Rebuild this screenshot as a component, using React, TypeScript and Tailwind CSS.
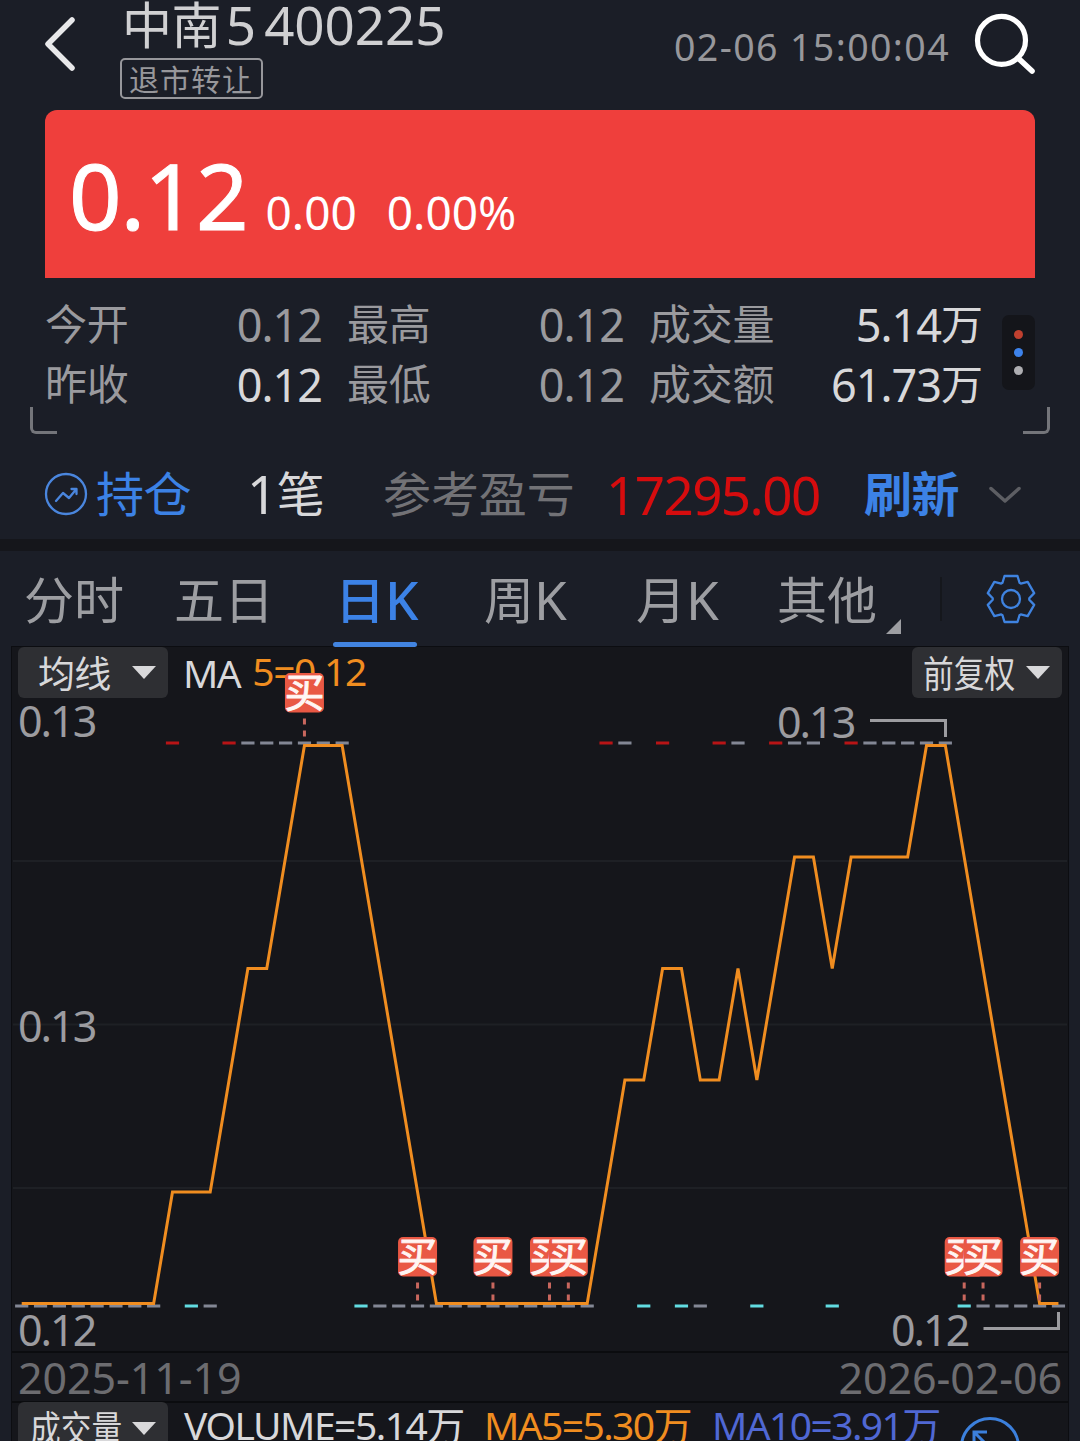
import type { ReactNode } from 'react';

const STEP = 18.85;
const px = (index: number) => 21.7 + STEP * index;

// [index, y] vertices of the MA5 curve
const maPoints = [
  [0, 1303.5], [7, 1303.5], [8, 1192], [10, 1192], [12, 968.5], [13, 968.5], [15, 745.5], [17, 745.5],
  [22, 1303.5], [30, 1303.5], [32, 1080], [33, 1080], [34, 968.5], [35, 968.5], [36, 1080], [37, 1080],
  [38, 968.5], [39, 1080], [41, 857], [42, 857], [43, 968.5], [44, 857], [47, 857], [48, 745.5],
  [49, 745.5], [54, 1303.5], [55, 1303.5],
];

const topUp = [8, 11, 31, 34, 37, 40, 44];
const topFlat = [12, 13, 14, 15, 16, 17, 32, 38, 41, 42, 45, 46, 47, 48, 49];
const lowDown = [9, 18, 33, 35, 39, 43, 50];
const lowFlat = [
  0, 1, 2, 3, 4, 5, 6, 7, 10, 19, 20, 21, 22, 23, 24, 25, 26, 27, 28, 29, 30, 36, 51, 52, 53, 54, 55,
];

const buys = [
  { index: 15, y: 673 },
  { index: 21, y: 1237 },
  { index: 25, y: 1237 },
  { index: 28, y: 1237 },
  { index: 29, y: 1237 },
  { index: 50, y: 1237 },
  { index: 51, y: 1237 },
  { index: 54, y: 1237 },
];

const tabs = [
  { cjk: '分时', latin: '', width: 'w-[150px]' },
  { cjk: '五日', latin: '', width: 'w-[161px]' },
  { cjk: '日', latin: 'K', width: 'w-[149px]', active: true },
  { cjk: '周', latin: 'K', width: 'w-[152px]' },
  { cjk: '月', latin: 'K', width: 'w-[141px]' },
  { cjk: '其他', latin: '', width: 'w-[129px]', more: true },
];

const stats = [
  [
    { label: '今开', value: '0.12', bright: false },
    { label: '最高', value: '0.12', bright: false },
    { label: '成交量', value: '5.14', unit: '万', bright: true },
  ],
  [
    { label: '昨收', value: '0.12', bright: true },
    { label: '最低', value: '0.12', bright: false },
    { label: '成交额', value: '61.73', unit: '万', bright: true },
  ],
];

function Num({ className = '', children }: { className?: string; children: ReactNode }) {
  return <span className={`font-['Noto_Sans','Noto_Sans_CJK_SC',sans-serif] leading-none ${className}`}>{children}</span>;
}

function Dashes({ items, y, color }: { items: number[]; y: number; color: string }) {
  return (
    <>
      {items.map((index) => (
        <rect key={index} x={px(index) - 6.6} y={y - 1.5} width={13.2} height={3} fill={color} />
      ))}
    </>
  );
}

function GearIcon() {
  const tooth = [[-8.5, -16.2], [-6.5, -23], [6.5, -23], [8.5, -16.2]];
  const points = [0, 1, 2, 3, 4, 5].flatMap((n) => {
    const a = (n * Math.PI) / 3;
    return tooth.map(([x, y]) => `${x * Math.cos(a) - y * Math.sin(a)},${x * Math.sin(a) + y * Math.cos(a)}`);
  });
  return (
    <svg className="h-[52px] w-[52px]" viewBox="-26 -26 52 52" fill="none" stroke="#3f83e0" strokeWidth="2.3" strokeLinejoin="round">
      <polygon points={points.join(' ')} />
      <circle r="9" />
    </svg>
  );
}

function Header() {
  return (
    <header className="flex h-[110px] items-start">
      <svg className="ml-10 mt-3 h-16 w-10" viewBox="40 12 40 64" fill="none" stroke="#e8e8ea" strokeWidth="5.5" strokeLinecap="round" strokeLinejoin="round">
        <path d="M72 20 48 44 72 68" />
      </svg>
      <div className="ml-10 flex flex-col items-start">
        <div className="flex h-[46px] items-center text-[#d0d0d2]">
          <span className="mb-[3px] ml-[2px] text-[50px] leading-none tracking-[-0.6px]">中南</span>
          <Num className="ml-[5px] mt-[3px] text-[53px]">5</Num>
          <Num className="ml-[8px] mt-[3px] text-[53px] tracking-[-0.1px]">400225</Num>
        </div>
        <div className="mt-3 flex h-[41px] w-[143px] items-center rounded-[5px] border-2 border-[#97979b] pb-[2px] pl-[7px] text-[30px] leading-none tracking-[1px] text-[#97979b]">
          退市转让
        </div>
      </div>
      <Num className="ml-auto mr-[20px] mt-[28px] text-[37.5px] tracking-[1.400px] text-[#97979b]">02-06 15:00:04</Num>
      <svg className="mr-[42px] mt-[10px] h-[68px] w-[68px]" viewBox="970 10 68 68" fill="none" stroke="#fff" strokeLinecap="round">
        <circle cx="1001.5" cy="40.3" r="24" strokeWidth="5.2" />
        <path d="M1018 58 1032 71" strokeWidth="5.6" />
      </svg>
    </header>
  );
}

function PriceBanner() {
  return (
    <section className="mx-[45px] flex h-[168px] items-baseline rounded-t-[12px] bg-[#ef3f3c] pl-6 text-white">
      <Num className="pt-[39px] text-[92px] tracking-[-1px] [-webkit-text-stroke:1px_white]">0.12</Num>
      <Num className="ml-[18px] text-[46px]">0.00</Num>
      <Num className="ml-[30px] text-[46px]">0.00%</Num>
    </section>
  );
}

function Stats() {
  return (
    <section className="relative flex h-[168px] pl-[45px] pt-[14px]">
      <div className="flex flex-col">
        {stats.map((row, i) => (
          <div key={i} className="grid h-[60px] grid-cols-[277px_277px_334px] items-center gap-x-[25px]">
            {row.map((cell) => (
              <div key={cell.label} className="flex items-center justify-between">
                <span className="pb-[1px] text-[42px] leading-none tracking-[-0.3px] text-[#9a9a9e]">{cell.label}</span>
                <span className={`flex items-center ${cell.bright ? 'text-[#d8d8da]' : 'text-[#9a9a9e]'}`}>
                  <Num className="pt-[4px] text-[45px] tracking-[-1px]">{cell.value}</Num>
                  {cell.unit ? <span className="pb-[1px] text-[42px] leading-none">{cell.unit}</span> : null}
                </span>
              </div>
            ))}
          </div>
        ))}
      </div>
      <div className="absolute right-[45px] top-[37px] flex h-[75px] w-[33px] flex-col items-center justify-center gap-[9px] rounded-[7px] bg-[#14151a]">
        <span className="h-[9px] w-[9px] rounded-full bg-[#c0402f]" />
        <span className="h-[9px] w-[9px] rounded-full bg-[#3d83ec]" />
        <span className="h-[9px] w-[9px] rounded-full bg-[#aeaeb2]" />
      </div>
      <span className="absolute left-[30px] top-[129px] h-[27px] w-[27px] rounded-bl-[6px] border-b-[3px] border-l-[3px] border-[#74757a]" />
      <span className="absolute right-[30px] top-[129px] h-[27px] w-[27px] rounded-br-[6px] border-b-[3px] border-r-[3px] border-[#74757a]" />
    </section>
  );
}

function Position() {
  return (
    <section className="flex h-[93px] items-center pl-[44px] text-[48px] leading-none tracking-[-0.5px]">
      <svg className="mt-[3px] h-11 w-11" viewBox="0 0 44 44" fill="none" stroke="#4a86de" strokeWidth="2.3" strokeLinecap="round" strokeLinejoin="round">
        <circle cx="22" cy="22" r="20" />
        <path d="M12 29 19 21 25 26 32 17.500M27.500 17H32.500V22" />
      </svg>
      <span className="ml-[8px] w-[153px] pb-[3px] text-[#3c82e6]">持仓</span>
      <span className="flex w-[134px] items-center text-[#d8d8da]">
        <Num className="-ml-[2px] pt-[2px] text-[53px]">1</Num>
        <span className="pb-[4px]">笔</span>
      </span>
      <span className="w-[223px] pb-[3px] tracking-[-0.1px] text-[#727276]">参考盈亏</span>
      <Num className="w-[258px] pt-[3px] text-[53px] tracking-[-1.6px] text-[#d60c0e]">17295.00</Num>
      <span className="w-[125px] pb-[3px] font-bold text-[#3c82e6]">刷新</span>
      <svg className="mt-1 h-5 w-8" viewBox="0 0 32 20" fill="none" stroke="#5d5e63" strokeWidth="3.5" strokeLinecap="round" strokeLinejoin="round">
        <path d="M2 3.500 16 16 30 3.500" />
      </svg>
    </section>
  );
}

function Tabs() {
  return (
    <nav className="flex h-24 items-center border-t-[12px] border-[#15161b] box-content pl-[24px] text-[50px] leading-none">
      {tabs.map((tab) => (
        <div
          key={tab.cjk}
          className={`relative flex h-24 items-center pb-[3px] ${tab.width} ${tab.active ? 'text-[#3c82e6]' : 'text-[#9d9ea2]'}`}
        >
          <span className={tab.active ? 'pb-[2px] font-medium' : 'pb-[2px]'}>{tab.cjk}</span>
          {tab.latin ? <Num className={tab.active ? 'pt-[3px] text-[53px] font-medium' : 'pt-[3px] text-[53px]'}>{tab.latin}</Num> : null}
          {tab.active ? <span className="absolute -left-[2px] bottom-0 h-[5px] w-[84px] rounded-sm bg-[#4284e0]" /> : null}
          {tab.more ? (
            <svg className="absolute bottom-[13px] right-[5px] h-[15px] w-[15px]" viewBox="0 0 15 15">
              <path d="M15 0V15H0Z" fill="#9d9ea2" />
            </svg>
          ) : null}
        </div>
      ))}
      <span className="ml-[34px] h-[44px] w-[2px] bg-[#15171c]" />
      <div className="ml-[43px]">
        <GearIcon />
      </div>
    </nav>
  );
}

function Caret() {
  return (
    <svg className="h-[13px] w-6" viewBox="0 0 24 13">
      <path d="M0 0H24L12 13Z" fill="#d8d8da" />
    </svg>
  );
}

function Chart() {
  return (
    <section className="relative h-[704px]">
      <svg className="block h-[704px] w-[1056px]" viewBox="12 647 1056 704">
        <g stroke="#1e2025" strokeWidth="2">
          <path d="M13 861H1067M13 1024.500H1067M13 1188H1067" />
        </g>
        <Dashes items={topUp} y={743} color="#b81416" />
        <Dashes items={topFlat} y={743} color="#838795" />
        <Dashes items={lowDown} y={1306} color="#62dce2" />
        <Dashes items={lowFlat} y={1306} color="#838795" />
        <polyline
          points={maPoints.map(([i, y]) => `${px(i)},${y}`).join(' ')}
          fill="none"
          stroke="#f08d20"
          strokeWidth="3"
        />
        <g fill="none" stroke="#9c9ca0" strokeWidth="3">
          <path d="M870 720.500H945.500V737" />
          <path d="M983.500 1328.500H1058.500V1312" />
        </g>
      </svg>

      <div className="absolute inset-x-0 top-0 flex h-[51px] items-center px-[6px]">
        <div className="flex h-[51px] w-[150px] items-center justify-between rounded-md bg-[#2e2f33] pl-5 pr-3 text-[37px] leading-none tracking-[-0.7px] text-[#d8d8da]">
          <span>均线</span>
          <Caret />
        </div>
        <Num className="ml-[15px] text-[39px] tracking-[-1.500px] text-[#d8d8da]">MA</Num>
        <Num className="mb-[4px] ml-[12px] text-[39px] tracking-[-1.400px] text-[#f08d20]">5=0.12</Num>
        <div className="ml-auto flex h-[51px] w-[150px] items-center rounded-md bg-[#2e2f33] pl-[11px] text-[37px] leading-none text-[#d8d8da]">
          <span className="w-[103px] origin-left scale-x-[0.83] whitespace-nowrap">前复权</span>
          <Caret />
        </div>
      </div>

      <div className="absolute inset-0 text-[43px] tracking-[-2px] text-[#9c9ca0]">
        <Num className="absolute left-[6px] top-[52px]">0.13</Num>
        <Num className="absolute left-[6px] top-[357px]">0.13</Num>
        <Num className="absolute left-[6px] top-[661px]">0.12</Num>
        <Num className="absolute left-[765px] top-[53px]">0.13</Num>
        <Num className="absolute left-[879px] top-[661px]">0.12</Num>
      </div>

      {/* trade markers sit above the curve and the MA readout */}
      <svg className="absolute left-0 top-0 h-[704px] w-[1056px]" viewBox="12 647 1056 704">
        {buys.map(({ index, y }) => (
          <g key={index}>
            <rect x={px(index) - 19.5} y={y} width={39} height={39.5} rx={5} fill="#e95844" />
            <path d={`M${px(index)} ${y + 45.5}v6m0 6v6`} stroke="#c8675e" strokeWidth="3" />
            <text
              x={px(index)}
              y={y + 34}
              textAnchor="middle"
              stroke="#fff5f3"
              strokeWidth="0.9"
              className="fill-[#fff5f3] font-['Noto_Sans_CJK_SC',sans-serif] text-[40px]"
            >
              买
            </text>
          </g>
        ))}
      </svg>
    </section>
  );
}

function VolumeBar() {
  return (
    <div className="flex h-[52px] items-start border-t-2 border-[#0b0c0f] pl-[6px]">
      <div className="-mt-[1px] flex h-[52px] w-[150px] items-center rounded-md bg-[#2e2f33] pl-3 text-[37px] leading-none text-[#d8d8da]">
        <span className="w-[102px] origin-left scale-x-[0.83] whitespace-nowrap pb-[2px]">成交量</span>
        <Caret />
      </div>
      <Num className="ml-[16px] mt-[2px] w-[300px] whitespace-nowrap text-[39px] tracking-[-1.500px] text-[#d8d8da]">VOLUME=5.14万</Num>
      <Num className="mt-[2px] w-[228px] whitespace-nowrap text-[39px] tracking-[-1.6px] text-[#f08d20]">MA5=5.30万</Num>
      <Num className="mt-[2px] w-[247px] whitespace-nowrap text-[39px] tracking-[-1.6px] text-[#5068d4]">MA10=3.91万</Num>
      <svg className="mt-[13px] h-[62px] w-[62px] shrink-0" viewBox="0 0 62 62" fill="none" stroke="#3c80dc" strokeWidth="3">
        <circle cx="31" cy="31" r="28.5" />
        <path d="M15 29V16H28M16 17 30 31" />
      </svg>
    </div>
  );
}

export default function App() {
  return (
    <div className="h-[1441px] w-[1080px] overflow-hidden bg-[#1b1e27] font-['Noto_Sans_CJK_SC',sans-serif]">
      <Header />
      <PriceBanner />
      <Stats />
      <Position />
      <Tabs />
      <main className="mx-3 h-[794px] bg-[#15161b] shadow-[0_0_0_1px_#0c0d11]">
        <Chart />
        <div className="flex h-[50px] items-center justify-between border-t-2 border-[#0b0c0f] px-[6px] text-[43px] text-[#6c6c70]">
          <Num className="tracking-[-0.1px]">2025-11-19</Num>
          <Num className="tracking-[-0.1px]">2026-02-06</Num>
        </div>
        <VolumeBar />
      </main>
    </div>
  );
}
